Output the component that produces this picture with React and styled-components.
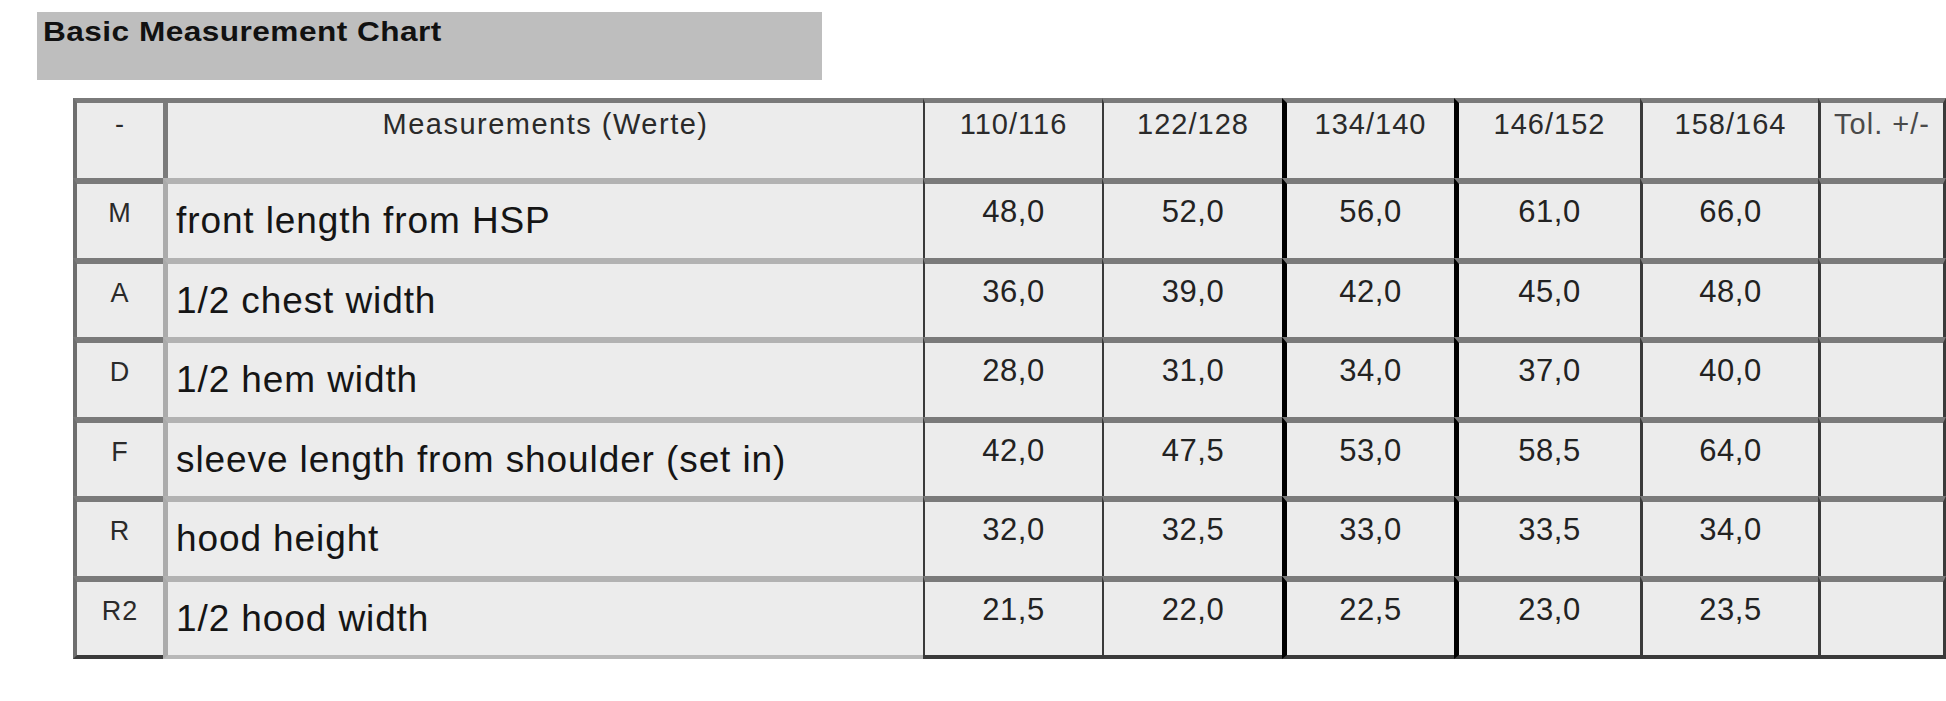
import React from "react";
import styled, {createGlobalStyle} from "styled-components";

const GlobalStyle = createGlobalStyle`
  html, body {
    margin: 0;
    padding: 0;
    background: #ffffff;
    overflow: hidden;
  }
  body {
    font-family: "Liberation Sans", Arial, sans-serif;
    color: #1c1c1c;
  }
`;

const Page = styled('div')`
  padding: 12px 0 0 37px;
  width: 1909px;
  height: 689px;
`;

const TitleBar = styled('div')`
  width: 785px;
  height: 68px;
  background-color: #bebebe;
  box-sizing: border-box;
  padding: 7px 0 0 6px;
`;

const TitleText = styled('span')`
  display: inline-block;
  font-size: 27px;
  line-height: 1;
  font-weight: bold;
  letter-spacing: 0.4px;
  color: #111;
  transform: scaleX(1.17);
  transform-origin: left top;
`;

const Grid = styled('div')`
  display: grid;
  grid-template-columns: 90px 760px 179px 180px 172px 186px 178px 128px;
  grid-template-rows: 80px repeat(5, 79.5px) 83.5px;
  margin: 18px 0 0 36px;
`;

// left border of each column: width, header colour, body colour
const LEFT = [
    {w: 4, head: '#6e6e6e', body: '#6e6e6e'},
    {w: 5, head: '#7a7a7a', body: '#ababab'},
    {w: 2, head: '#3a3a3a', body: '#3a3a3a'},
    {w: 2, head: '#3a3a3a', body: '#3a3a3a'},
    {w: 5, head: '#000000', body: '#000000'},
    {w: 5, head: '#000000', body: '#000000'},
    {w: 3, head: '#3a3a3a', body: '#3a3a3a'},
    {w: 3, head: '#3a3a3a', body: '#3a3a3a'},
];

const Cell = styled('div')`
  box-sizing: border-box;
  background-color: #ececec;
  overflow: hidden;
  white-space: nowrap;
  line-height: 1;
  border-left: ${p => LEFT[p.$col].w}px solid ${p => p.$head ? LEFT[p.$col].head : LEFT[p.$col].body};
  border-top: ${p => p.$head ? 5 : 6}px solid ${p => (!p.$head && p.$col === 1) ? '#b2b2b2' : '#7a7a7a'};
  border-right: ${p => p.$col === 7 ? '3px solid #3a3a3a' : 'none'};
  border-bottom: ${p => p.$last ? (p.$col === 1 ? '4px solid #b8b8b8' : '4px solid #3a3a3a') : 'none'};
  text-align: ${p => p.$left ? 'left' : 'center'};
`;

const HeadText = styled('span')`
  display: block;
  padding-top: 7px;
  font-size: 29px;
  letter-spacing: ${p => p.$wide ? '1.5px' : '1px'};
  color: ${p => p.$muted ? '#4a4a4a' : '#2a2a2a'};
`;

const KeyText = styled('span')`
  display: block;
  padding-top: ${p => p.$head ? 8 : 16}px;
  font-size: 27px;
  letter-spacing: 1px;
  color: #2a2a2a;
`;

const LabelText = styled('span')`
  display: block;
  padding: 18px 0 0 8px;
  font-size: 37px;
  letter-spacing: 0.9px;
  color: #151515;
`;

const ValueText = styled('span')`
  display: block;
  padding-top: 12px;
  font-size: 31px;
  letter-spacing: 0.6px;
  color: #222;
`;

const sizes = ['110/116', '122/128', '134/140', '146/152', '158/164'];

const rows = [
    {key: 'M', label: 'front length from HSP', values: ['48,0', '52,0', '56,0', '61,0', '66,0']},
    {key: 'A', label: '1/2 chest width', values: ['36,0', '39,0', '42,0', '45,0', '48,0']},
    {key: 'D', label: '1/2 hem width', values: ['28,0', '31,0', '34,0', '37,0', '40,0']},
    {key: 'F', label: 'sleeve length from shoulder (set in)', values: ['42,0', '47,5', '53,0', '58,5', '64,0']},
    {key: 'R', label: 'hood height', values: ['32,0', '32,5', '33,0', '33,5', '34,0']},
    {key: 'R2', label: '1/2 hood width', values: ['21,5', '22,0', '22,5', '23,0', '23,5']},
];

const App = () => {
    return (
        <>
            <GlobalStyle/>
            <Page>
                <TitleBar>
                    <TitleText>Basic Measurement Chart</TitleText>
                </TitleBar>
                <Grid>
                    <Cell $col={0} $head><KeyText $head>-</KeyText></Cell>
                    <Cell $col={1} $head><HeadText $wide>Measurements (Werte)</HeadText></Cell>
                    {sizes.map((s, i) => (
                        <Cell key={s} $col={i + 2} $head><HeadText>{s}</HeadText></Cell>
                    ))}
                    <Cell $col={7} $head><HeadText $muted>Tol. +/-</HeadText></Cell>

                    {rows.map((r, ri) => {
                        const last = ri === rows.length - 1;
                        return (
                            <React.Fragment key={r.key}>
                                <Cell $col={0} $last={last}><KeyText>{r.key}</KeyText></Cell>
                                <Cell $col={1} $last={last} $left><LabelText>{r.label}</LabelText></Cell>
                                {r.values.map((v, i) => (
                                    <Cell key={i} $col={i + 2} $last={last}><ValueText>{v}</ValueText></Cell>
                                ))}
                                <Cell $col={7} $last={last}/>
                            </React.Fragment>
                        );
                    })}
                </Grid>
            </Page>
        </>
    );
};

export default App;
